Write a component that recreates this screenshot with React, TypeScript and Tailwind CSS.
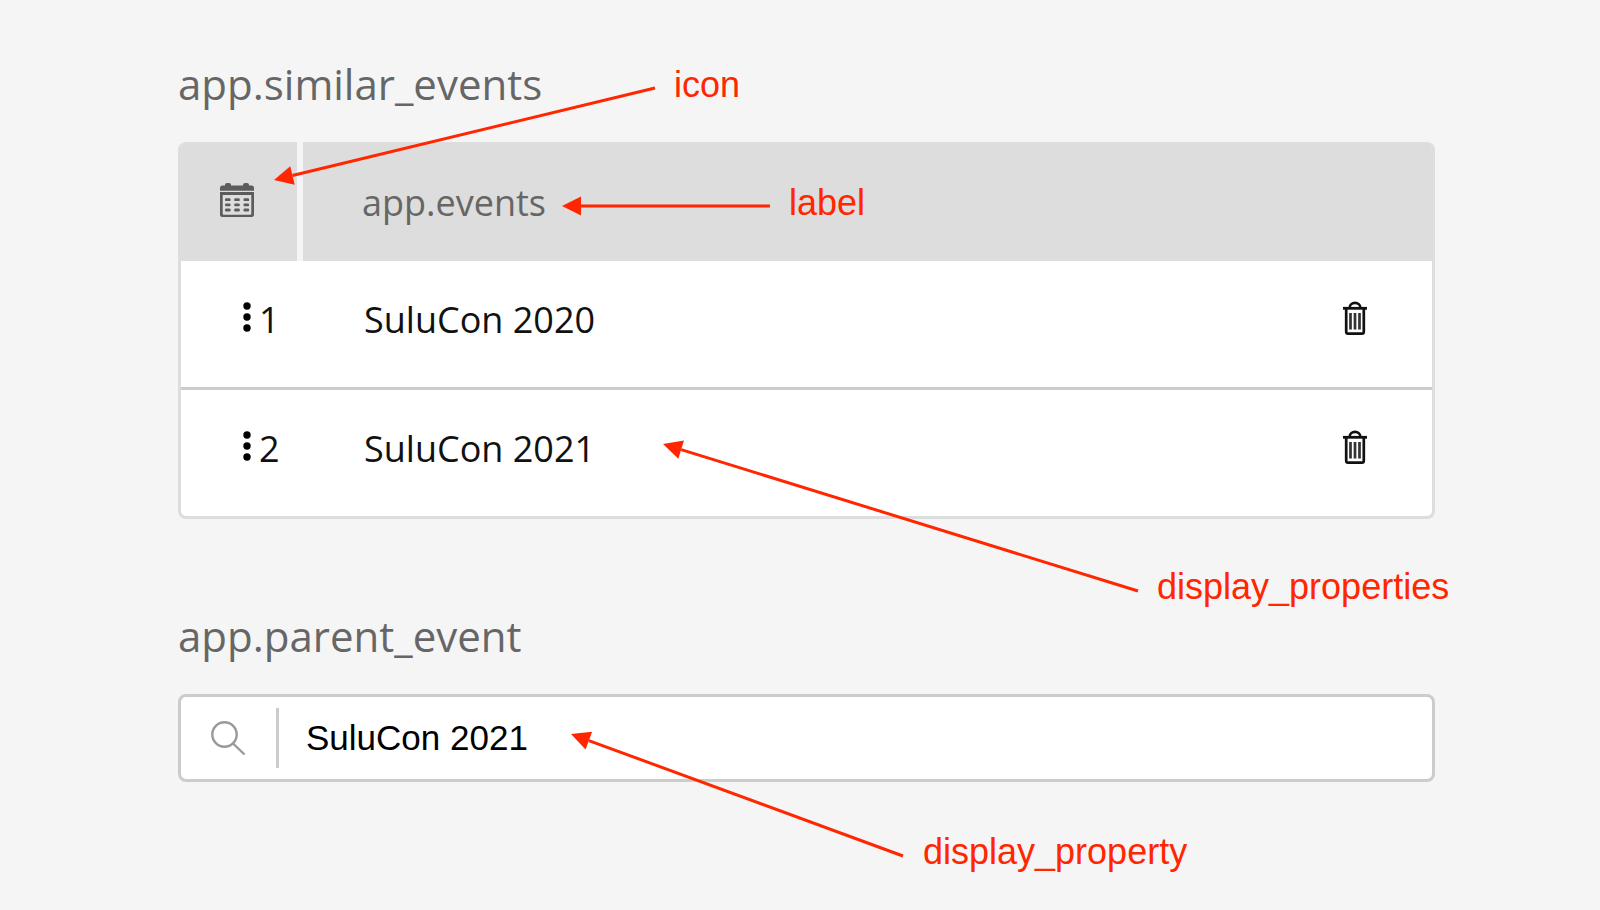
const events = ["SuluCon 2020", "SuluCon 2021"];

const arrows = [
  { x1: 655, y1: 88, x2: 274, y2: 180 },
  { x1: 770, y1: 206, x2: 562, y2: 206 },
  { x1: 1138, y1: 591, x2: 663, y2: 444 },
  { x1: 903, y1: 856, x2: 571, y2: 734 },
];

function CalendarIcon() {
  return (
    <svg className="h-9 w-9" viewBox="0 0 36 36" fill="#5c5c5c" aria-hidden="true">
      <path d="M1 8.700V6Q1 3.500 3.500 3.500H6V2.800Q6 1 8 1H10Q12 1 12 2.800V3.500H24V2.800Q24 1 26 1H28Q30 1 30 2.800V3.500H32.500Q35 3.500 35 6V8.700Z" />
      <path
        fillRule="evenodd"
        d="M1 10H35V32.500Q35 35 32.500 35H3.500Q1 35 1 32.500ZM3.700 13V31.500Q3.700 32.700 4.700 32.700H31.300Q32.300 32.700 32.300 31.500V13Z"
      />
      {[16.2, 21.4, 26.6].map((y) =>
        [6, 15.2, 24.5].map((x) => <rect key={`${x}-${y}`} x={x} y={y} width="5.600" height="2.900" rx="1.200" />)
      )}
    </svg>
  );
}

function TrashIcon() {
  return (
    <svg className="h-9 w-9" viewBox="0 0 36 36" fill="none" stroke="#111" aria-hidden="true">
      <path d="M6 8.300H30" strokeWidth="2.800" />
      <path d="M12.500 8C12.500 1.200 23.500 1.200 23.500 8" strokeWidth="2.600" />
      <path d="M9.200 8V31.500Q9.200 33.700 11 33.700H25Q26.800 33.700 26.800 31.500V8" strokeWidth="2.700" />
      <path d="M13.500 13V29.500M18 13V29.500M22.500 13V29.500" strokeWidth="2.700" stroke="#333" />
    </svg>
  );
}

function DragIcon() {
  return (
    <svg className="mb-1.5 h-8 w-2" viewBox="0 0 8 32" fill="#000" aria-hidden="true">
      <circle cx="4" cy="5" r="3.700" />
      <circle cx="4" cy="16" r="3.700" />
      <circle cx="4" cy="27" r="3.700" />
    </svg>
  );
}

function SearchIcon() {
  return (
    <svg className="h-9 w-9" viewBox="0 0 36 36" fill="none" stroke="#999" strokeWidth="2.400" aria-hidden="true">
      <circle cx="14.500" cy="14.500" r="12.200" />
      <path d="M23 23.500L34.500 34.500" />
    </svg>
  );
}

function Arrow({ x1, y1, x2, y2 }: { x1: number; y1: number; x2: number; y2: number }) {
  const length = Math.hypot(x2 - x1, y2 - y1);
  const ux = (x1 - x2) / length;
  const uy = (y1 - y2) / length;
  const bx = x2 + ux * 19;
  const by = y2 + uy * 19;
  return (
    <g>
      <path d={`M${x1} ${y1}L${bx} ${by}`} stroke="#ff2600" strokeWidth="3" />
      <path
        d={`M${x2} ${y2}L${bx - uy * 9.5} ${by + ux * 9.5}L${bx + uy * 9.5} ${by - ux * 9.5}Z`}
        fill="#ff2600"
      />
    </g>
  );
}

function Annotations() {
  return (
    <div className="pointer-events-none absolute top-0 left-0 font-['Liberation_Sans',sans-serif] text-4xl leading-10 text-[#ff2600]">
      <svg width="1600" height="910" viewBox="0 0 1600 910" aria-hidden="true">
        {arrows.map((arrow) => (
          <Arrow key={arrow.y1} {...arrow} />
        ))}
      </svg>
      <span className="absolute top-[65px] left-[674px]">icon</span>
      <span className="absolute top-[183px] left-[789px]">label</span>
      <span className="absolute top-[567px] left-[1157px]">display_properties</span>
      <span className="absolute top-[832px] left-[923px]">display_property</span>
    </div>
  );
}

export default function App() {
  return (
    <div className="relative min-h-screen overflow-hidden bg-[#f5f5f5] font-['Open_Sans','Noto_Sans',sans-serif] text-4xl leading-12 text-[#111]">
      <main className="pt-[60px] pr-[165px] pl-[178px]">
        <section>
          <h2 className="text-[42px] text-[#666]">app.similar_events</h2>
          <div className="mt-[34px] overflow-hidden rounded-lg border-3 border-t-0 border-[#ddd] bg-white">
            <div className="flex h-[119px] bg-[#ddd]">
              <button
                type="button"
                aria-label="Choose events"
                className="flex w-[122px] items-center border-r-6 border-[#f5f5f5] pb-1 pl-[38px]"
              >
                <CalendarIcon />
              </button>
              <div className="flex items-center pt-[3px] pl-[59px] text-[#666]">app.events</div>
            </div>
            <ol className="divide-y-3 divide-[#ccc]">
              {events.map((name, i) => (
                <li key={name} className="box-content flex h-[126px] items-center pr-[59px] pl-[62px]">
                  <div className="flex flex-1 items-center pb-2">
                    <DragIcon />
                    <span className="ml-2 w-[105px]">{i + 1}</span>
                    <span>{name}</span>
                  </div>
                  <button type="button" aria-label={`Remove ${name}`} className="pb-3">
                    <TrashIcon />
                  </button>
                </li>
              ))}
            </ol>
          </div>
        </section>
        <section className="mt-[93px]">
          <label htmlFor="parent" className="block text-[42px] text-[#666]">
            app.parent_event
          </label>
          <div className="mt-[34px] flex h-[88px] items-center rounded-lg border-3 border-[#ccc] bg-white pl-[29px]">
            <SearchIcon />
            <input
              id="parent"
              defaultValue="SuluCon 2021"
              className="ml-[30px] h-[60px] min-w-0 flex-1 border-l-3 border-[#ccc] pl-[27px] font-['Liberation_Sans',sans-serif] text-[35px] text-black outline-none"
            />
          </div>
        </section>
      </main>
      <Annotations />
    </div>
  );
}
